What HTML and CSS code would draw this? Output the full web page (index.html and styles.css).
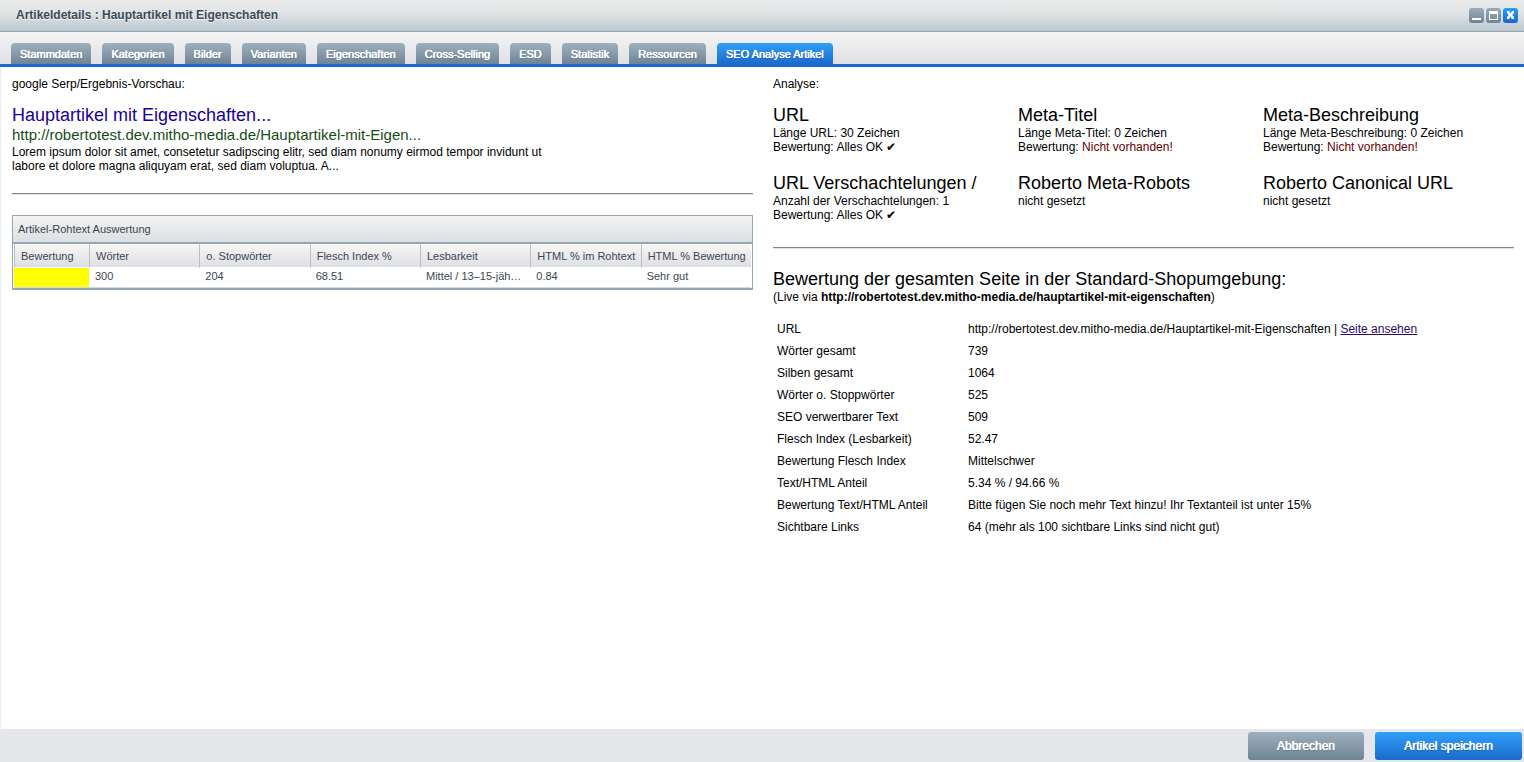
FILE: index.html
```
<!DOCTYPE html>
<html lang="de">
<head>
<meta charset="utf-8">
<title>Artikeldetails : Hauptartikel mit Eigenschaften</title>
<link rel="stylesheet" href="styles.css">
</head>
<body>
<div class="window">
  <header class="titlebar">
    <h1 class="titlebar-text">Artikeldetails : Hauptartikel mit Eigenschaften</h1>
    <div class="tools">
      <button class="tool" type="button" aria-label="Minimieren"><svg viewBox="0 0 15 15"><path d="M3 10h9v2H3z"/></svg></button>
      <button class="tool" type="button" aria-label="Maximieren"><svg viewBox="0 0 15 15"><path fill-rule="evenodd" d="M3 3h9v9H3zM4 6v5h7V6z"/></svg></button>
      <button class="tool tool-close" type="button" aria-label="Schließen"><svg viewBox="0 0 15 15"><path d="M4 3h2l1.500 2.500L9 3h2v2L9.200 7l1.800 2v2H9L7.500 8.700 6 11H4V9l1.800-2L4 5z"/></svg></button>
    </div>
  </header>
  <nav class="tabs">
    <button class="tab" type="button">Stammdaten</button>
    <button class="tab" type="button">Kategorien</button>
    <button class="tab" type="button">Bilder</button>
    <button class="tab" type="button">Varianten</button>
    <button class="tab" type="button">Eigenschaften</button>
    <button class="tab" type="button">Cross-Selling</button>
    <button class="tab" type="button">ESD</button>
    <button class="tab" type="button">Statistik</button>
    <button class="tab" type="button">Ressourcen</button>
    <button class="tab tab-active" type="button">SEO Analyse Artikel</button>
  </nav>
  <main class="content">
    <section class="column">
      <p class="label">google Serp/Ergebnis-Vorschau:</p>
      <div class="serp">
        <h2 class="heading serp-title">Hauptartikel mit Eigenschaften...</h2>
        <p class="serp-url">http://robertotest.dev.mitho-media.de/Hauptartikel-mit-Eigen...</p>
        <p class="serp-text">Lorem ipsum dolor sit amet, consetetur sadipscing elitr, sed diam nonumy eirmod tempor invidunt ut labore et dolore magna aliquyam erat, sed diam voluptua. A...</p>
      </div>
      <hr class="rule">
      <div class="panel">
        <h3 class="panel-title" id="raw-title">Artikel-Rohtext Auswertung</h3>
        <table class="grid" aria-labelledby="raw-title">
          <colgroup><col class="c-rate"><col class="c-std"><col class="c-std"><col class="c-std"><col class="c-std"><col class="c-std"><col class="c-std"></colgroup>
          <thead>
            <tr><th>Bewertung</th><th>Wörter</th><th>o. Stopwörter</th><th>Flesch Index %</th><th>Lesbarkeit</th><th>HTML % im Rohtext</th><th>HTML % Bewertung</th></tr>
          </thead>
          <tbody>
            <tr><td class="rating"></td><td>300</td><td>204</td><td>68.51</td><td>Mittel / 13–15-jäh…</td><td>0.84</td><td>Sehr gut</td></tr>
          </tbody>
        </table>
      </div>
    </section>
    <section class="column">
      <p class="label">Analyse:</p>
      <div class="checks">
        <div><h2 class="heading">URL</h2><p>Länge URL: 30 Zeichen</p><p>Bewertung: Alles OK ✔</p></div>
        <div><h2 class="heading">Meta-Titel</h2><p>Länge Meta-Titel: 0 Zeichen</p><p>Bewertung: <span class="bad">Nicht vorhanden!</span></p></div>
        <div><h2 class="heading">Meta-Beschreibung</h2><p>Länge Meta-Beschreibung: 0 Zeichen</p><p>Bewertung: <span class="bad">Nicht vorhanden!</span></p></div>
        <div><h2 class="heading">URL Verschachtelungen /</h2><p>Anzahl der Verschachtelungen: 1</p><p>Bewertung: Alles OK ✔</p></div>
        <div><h2 class="heading">Roberto Meta-Robots</h2><p>nicht gesetzt</p></div>
        <div><h2 class="heading">Roberto Canonical URL</h2><p>nicht gesetzt</p></div>
      </div>
      <hr class="rule">
      <h2 class="heading">Bewertung der gesamten Seite in der Standard-Shopumgebung:</h2>
      <p>(Live via <strong>http://robertotest.dev.mitho-media.de/hauptartikel-mit-eigenschaften</strong>)</p>
      <table class="facts">
        <tbody>
          <tr><th scope="row">URL</th><td>http://robertotest.dev.mitho-media.de/Hauptartikel-mit-Eigenschaften | <a class="link" href="#">Seite ansehen</a></td></tr>
          <tr><th scope="row">Wörter gesamt</th><td>739</td></tr>
          <tr><th scope="row">Silben gesamt</th><td>1064</td></tr>
          <tr><th scope="row">Wörter o. Stoppwörter</th><td>525</td></tr>
          <tr><th scope="row">SEO verwertbarer Text</th><td>509</td></tr>
          <tr><th scope="row">Flesch Index (Lesbarkeit)</th><td>52.47</td></tr>
          <tr><th scope="row">Bewertung Flesch Index</th><td>Mittelschwer</td></tr>
          <tr><th scope="row">Text/HTML Anteil</th><td>5.34 % / 94.66 %</td></tr>
          <tr><th scope="row">Bewertung Text/HTML Anteil</th><td>Bitte fügen Sie noch mehr Text hinzu! Ihr Textanteil ist unter 15%</td></tr>
          <tr><th scope="row">Sichtbare Links</th><td>64 (mehr als 100 sichtbare Links sind nicht gut)</td></tr>
        </tbody>
      </table>
    </section>
  </main>
  <footer class="actions">
    <button class="button" type="button">Abbrechen</button>
    <button class="button button-primary" type="button">Artikel speichern</button>
  </footer>
</div>
</body>
</html>
```
FILE: styles.css
```
* { box-sizing: border-box; }

body {
  margin: 0;
  font: 12px/14px "Liberation Sans", Arial, sans-serif;
  color: #000;
  background: #fff;
}

h1, h2, h3, p { margin: 0; font-weight: normal; }
button { font-family: inherit; border: 0; margin: 0; }

.window {
  display: flex;
  flex-direction: column;
  min-height: 100vh;
}

.titlebar {
  display: flex;
  align-items: center;
  justify-content: space-between;
  height: 32px;
  padding: 0 6px 1px 16px;
  border-bottom: 1px solid #93a6b4;
  background: linear-gradient(#ebebeb, #dfe2e4 45%, #bcc7ce);
}
.titlebar-text {
  font-size: 12px;
  font-weight: bold;
  color: #3c4a57;
  text-shadow: 0 1px 0 #f4f6f7;
}
.tools { display: flex; gap: 2px; }
.tool {
  width: 15px;
  height: 15px;
  padding: 0;
  border-radius: 3px;
  background: linear-gradient(#9aabb8, #6f8597);
}
.tool-close { background: linear-gradient(#2b9df6, #1767cd); }
.tool svg { display: block; fill: #fff; }

.tabs {
  display: flex;
  align-items: flex-end;
  gap: 11px;
  height: 35px;
  padding-left: 11px;
  border-bottom: 3px solid #1b6bcb;
  background: linear-gradient(#f5f5f6, #dfe0e4);
}
.tab {
  height: 21px;
  padding: 1px 9px 0;
  border-radius: 4px 4px 0 0;
  font-size: 11px;
  line-height: 20px;
  color: #fff;
  white-space: nowrap;
  text-shadow: 0 0 1px #fff, 0 0 0 #fff, 0 1px 1px #5e7485;
  background: linear-gradient(#9fb0bc, #6e8496);
}
.tab-active {
  text-shadow: 0 0 1px #fff, 0 0 0 #fff, 0 1px 1px #0c4fc4;
  background: linear-gradient(#2fa0f8, #1b6bcb);
}

.content {
  flex: 1;
  display: grid;
  grid-template-columns: minmax(0, 1fr) minmax(0, 1fr);
  gap: 20px;
  padding: 10px 10px 10px 11px;
  border-left: 1px solid #e9edf4;
}
.label { margin-bottom: 14px; }
.heading {
  margin-bottom: 1px;
  font-size: 18px;
  line-height: 20px;
  white-space: nowrap;
}
.rule {
  margin: 20px 0;
  border: 0;
  border-top: 1px solid #858585;
  border-bottom: 1px solid #e4e4e4;
}

.serp-title { margin-bottom: 0; color: #1a0096; }
.serp-url { font-size: 15px; line-height: 20px; color: #174c17; }
.serp-text { max-width: 540px; }

.panel {
  border: 1px solid #93a6b4;
  border-bottom-width: 2px;
  color: #3c4650;
  font-size: 11px;
}
.panel-title {
  padding: 6px 5px;
  border-bottom: 2px solid #93a6b4;
  font-size: 11px;
  background: linear-gradient(#f3f3f3, #dddfe1);
}
.grid {
  width: 100%;
  padding: 0 1px;
  table-layout: fixed;
  border-collapse: separate;
  border-spacing: 0;
}
.c-rate { width: 75px; }
.grid th, .grid td {
  overflow: hidden;
  white-space: nowrap;
  text-align: left;
  font-weight: normal;
}
.grid th {
  height: 24px;
  padding: 0 0 0 6px;
  border-left: 1px solid #b9bec4;
  border-top: 1px solid #fff;
  border-bottom: 1px solid #fff;
  background: linear-gradient(#f6f6f6, #dedfe3) padding-box;
}
.grid td {
  height: 20px;
  padding: 0 5px 4px 6px;
  border-bottom: 1px solid #d3dbe1;
}
.grid .rating { background: #ff0 padding-box; }

.checks {
  display: grid;
  grid-template-columns: repeat(3, minmax(0, 1fr));
  row-gap: 19px;
  padding-right: 6px;
  margin-bottom: 25px;
}
.bad { color: #6b0000; }

.facts { margin-top: 13px; border-spacing: 2px; }
.facts th, .facts td { padding: 3px 2px; font-weight: normal; text-align: left; }
.facts th { width: 189px; }
.link { color: #2b0a6b; }

.actions {
  display: flex;
  justify-content: flex-end;
  gap: 11px;
  padding: 3px 2px 2px;
  background: #e5e7eb;
}
.button {
  min-width: 116px;
  height: 28px;
  padding: 0 28px;
  border-radius: 3px;
  font-size: 12px;
  color: #fff;
  text-shadow: 0 0 1px #fff, 0 0 0 #fff, 0 1px 1px #51687a;
  background: linear-gradient(#9fb0bc, #6e8496);
}
.button-primary {
  min-width: 147px;
  text-shadow: 0 0 1px #fff, 0 0 0 #fff, 0 1px 1px #0c4fa4;
  background: linear-gradient(#2fa0f8, #1b6bcb);
}
```
